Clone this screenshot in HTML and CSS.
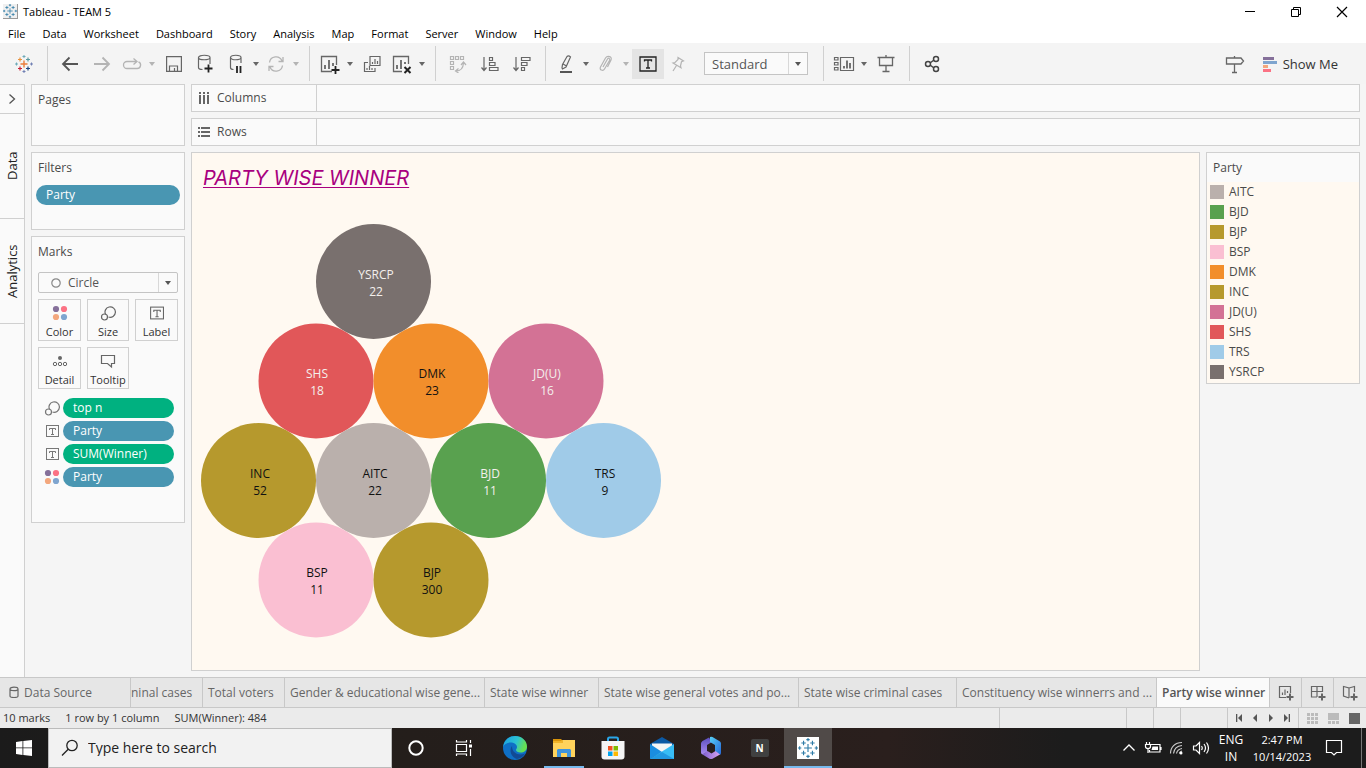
FILE: index.html
```html
<!DOCTYPE html>
<html lang="en">
<head>
<meta charset="utf-8">
<title>Tableau - TEAM 5</title>
<meta name="viewport" content="width=device-width, initial-scale=1">
<link rel="stylesheet" href="styles.css">
</head>
<body>
<svg class="defs" aria-hidden="true">
  <symbol id="caret" viewBox="0 0 12 12"><path d="M3 4h6L6 8z" fill="currentColor"/></symbol>
  <symbol id="label" viewBox="0 0 14 14"><rect x="1.5" y="1.5" width="12" height="11" fill="none" stroke="currentColor"/><path d="M4.5 6V4.500h6V6M7.500 4.500v5.500M6 10.500h3" fill="none" stroke="currentColor"/></symbol>
  <symbol id="size" viewBox="0 0 16 16"><path d="M5.600 9.500A5.200 5.200 0 1 1 8.500 12" fill="none" stroke="currentColor" stroke-width="1.200"/><circle cx="4.500" cy="12" r="3" fill="none" stroke="currentColor" stroke-width="1.200"/></symbol>
  <symbol id="dots" viewBox="0 0 16 16"><circle cx="4" cy="4" r="3.100" fill="#85709a"/><circle cx="12" cy="4" r="3.100" fill="#fb7284"/><circle cx="4" cy="12" r="3.100" fill="#f3a77d"/><circle cx="12" cy="12" r="3.100" fill="#7fa5cf"/></symbol>
  <symbol id="plusmark" viewBox="0 0 18 18"><path d="M9 5.500v7M5.500 9h7M5 2.500v4M3 4.500h4M13 2.500v4M11 4.500h4M5 11.500v4M3 13.500h4M13 11.500v4M11 13.500h4M9 0v3M7.500 1.500h3M9 15v3M7.500 16.500h3M0 9h3M1.500 7.500v3M15 9h3M16.500 7.500v3" fill="none" stroke="currentColor"/></symbol>
</svg>

<header class="titlebar">
  <span class="app-badge"><svg width="14" height="14"><use href="#plusmark"/></svg></span>
  <span class="app-name">Tableau - TEAM 5</span>
  <div class="window-buttons">
    <button aria-label="Minimize"><svg width="12" height="12"><path d="M1 5.500h10" stroke="#000"/></svg></button>
    <button aria-label="Restore"><svg width="12" height="12" fill="none" stroke="#000"><path d="M1.500 3.500h7v7h-7zM3.500 3V1.500h7v7H9"/></svg></button>
    <button aria-label="Close"><svg width="12" height="12" stroke="#000" stroke-width="1.200"><path d="M1 1l10 10M11 1L1 11"/></svg></button>
  </div>
</header>

<nav class="menubar">
  <a href="#">File</a><a href="#">Data</a><a href="#">Worksheet</a><a href="#">Dashboard</a><a href="#">Story</a><a href="#">Analysis</a><a href="#">Map</a><a href="#">Format</a><a href="#">Server</a><a href="#">Window</a><a href="#">Help</a>
</nav>

<div class="toolbar">
  <button class="tool" aria-label="Start page"><svg width="18" height="18" viewBox="0 0 18 18" fill="none"><path d="M9 5.500v7M5.500 9h7" stroke="#ea7c3a" stroke-width="1.400"/><path d="M5 2.500v4M3 4.500h4" stroke="#e8923c" stroke-width="1.200"/><path d="M13 2.500v4M11 4.500h4" stroke="#5b9aa0" stroke-width="1.200"/><path d="M5 11.500v4M3 13.500h4" stroke="#c72035" stroke-width="1.200"/><path d="M13 11.500v4M11 13.500h4" stroke="#1f457e" stroke-width="1.200"/><path d="M9 0v3M7.500 1.500h3M0 9h3M1.500 7.500v3" stroke="#6eaab8"/><path d="M9 15v3M7.500 16.500h3M15 9h3M16.500 7.500v3" stroke="#7180b4"/></svg></button>
  <span class="sep"></span>
  <button class="tool" aria-label="Undo"><svg width="18" height="16" fill="none" stroke="#555" stroke-width="1.800"><path d="M17 8H2M8.500 1.500L2 8l6.500 6.500"/></svg></button>
  <button class="tool off" aria-label="Redo"><svg width="18" height="16" fill="none" stroke="currentColor" stroke-width="1.800"><path d="M1 8h15M9.500 1.500L16 8l-6.500 6.500"/></svg></button>
  <button class="tool narrow off" aria-label="Replay"><svg width="20" height="14" fill="none" stroke="currentColor" stroke-width="1.300"><path d="M14 4.500H5a3.500 3.500 0 0 0 0 7h10a3.500 3.500 0 0 0 1.500-6.700M11.500 1.500l3.500 3-3.500 3"/></svg></button>
  <button class="drop off" aria-label="Replay options"><svg width="12" height="12"><use href="#caret"/></svg></button>
  <button class="tool" aria-label="Save"><svg width="16" height="16" fill="none" stroke="#666" stroke-width="1.200"><path d="M.6.600h14.800v14.800H.600zM3.500 15V10h8v5M8.500 12v3"/></svg></button>
  <button class="tool" aria-label="New data source"><svg width="18" height="20" fill="none" stroke="#666" stroke-width="1.200"><path d="M1.500 3.500v10c0 1 1.500 2 4 2M13 3.500V10M1.500 3.500c0-3 11.500-3 11.500 0s-11.500 3-11.500 0z"/><path d="M11.500 10.500v8M7.500 14.500h8" stroke="#222" stroke-width="1.800"/></svg></button>
  <button class="tool narrow" aria-label="Pause updates"><svg width="16" height="20" fill="none" stroke="#666" stroke-width="1.200"><path d="M2.500 3.500v10c0 1 1 2 3 2M13 3.500V9M2.500 3.500c0-3 10.500-3 10.500 0s-10.500 3-10.500 0z"/><path d="M9 12v7M12.500 12v7" stroke="#222" stroke-width="1.800"/></svg></button>
  <button class="drop" aria-label="Pause options"><svg width="12" height="12"><use href="#caret"/></svg></button>
  <button class="tool narrow off" aria-label="Refresh"><svg width="18" height="16" fill="none" stroke="currentColor" stroke-width="1.300"><path d="M2.500 6.500A6.500 6.500 0 0 1 15 5M15.500 9.500A6.500 6.500 0 0 1 3 11M16 1v4.500h-4.500M2 15v-4.500h4.500"/></svg></button>
  <button class="drop off" aria-label="Refresh options"><svg width="12" height="12"><use href="#caret"/></svg></button>
  <span class="sep"></span>
  <button class="tool narrow" aria-label="New worksheet"><svg width="20" height="20" fill="none" stroke="#666" stroke-width="1.300"><path d="M16.500 11V2.500h-15v15H12"/><path d="M5 15v-4M9 15V6M13 12V9" stroke-width="1.800"/><path d="M15.500 12v8M11.500 16h8" stroke="#222" stroke-width="1.800"/></svg></button>
  <button class="drop" aria-label="New sheet options"><svg width="12" height="12"><use href="#caret"/></svg></button>
  <button class="tool" aria-label="Duplicate"><svg width="18" height="18" fill="none" stroke="#666" stroke-width="1.200"><path d="M7 1.500h10v9H7zM5 7.500H1.500v9H12V13M9.500 9V7M12 9V4M14.500 9V6M4 15v-2M6.500 15v-4M9 15v-2"/></svg></button>
  <button class="tool narrow" aria-label="Clear sheet"><svg width="20" height="20" fill="none" stroke="#666" stroke-width="1.300"><path d="M16.500 10V2.500h-15v15H10"/><path d="M5 15v-4M9 15V6M13 10V8" stroke-width="1.800"/><path d="M12.500 13l6 6M18.500 13l-6 6" stroke="#222" stroke-width="2"/></svg></button>
  <button class="drop" aria-label="Clear options"><svg width="12" height="12"><use href="#caret"/></svg></button>
  <span class="sep"></span>
  <button class="tool off" aria-label="Swap rows and columns"><svg width="18" height="18" fill="none" stroke="currentColor" stroke-width="1.200"><path d="M1.500 1.500h3v3h-3zM6.500 1.500h3v3h-3zM11.500 1.500h3v3h-3zM1.500 6.500h3v3h-3zM1.500 11.500h3v3h-3zM7 16q7 0 7.500-8M12 10l2.500-3L17 10M9.500 13.500L6.500 16l3 2"/></svg></button>
  <button class="tool" aria-label="Sort ascending"><svg width="18" height="16" fill="none" stroke="#666" stroke-width="1.200"><path d="M3 1v13M.500 11.500L3 14.500l2.500-3M8.500 1.500h3v3h-3zM8.500 6.500h5.500v3H8.500zM8.500 11.500h8.500v3H8.500z"/></svg></button>
  <button class="tool" aria-label="Sort descending"><svg width="18" height="16" fill="none" stroke="#666" stroke-width="1.200"><path d="M3 1v13M.500 11.500L3 14.500l2.500-3M8.500 1.500h8.500v3H8.500zM8.500 6.500h5.500v3H8.500zM8.500 11.500h3v3h-3z"/></svg></button>
  <span class="sep"></span>
  <button class="tool narrow" aria-label="Highlight"><svg width="14" height="20" fill="none" stroke="#666" stroke-width="1.200"><path d="M3.500 10.500L8 2.500q1.500-1.500 3.500.500L7 13l-3.500 2-.500-1zM4 10l3.500 2"/><path d="M1 18h12" stroke="#555" stroke-width="2"/></svg></button>
  <button class="drop" aria-label="Highlight options"><svg width="12" height="12"><use href="#caret"/></svg></button>
  <button class="tool narrow off" aria-label="Group members"><svg width="16" height="18" fill="none" stroke="currentColor" stroke-width="1.200"><path d="M5 12l4.500-8c1-1.500 3-.500 2 1.500L6.500 14c-1.500 2.500-5.500 1-4-2L7.500 3c2-3 7-1.500 5.500 2l-3.500 7"/></svg></button>
  <button class="drop off" aria-label="Group options"><svg width="12" height="12"><use href="#caret"/></svg></button>
  <button class="tool pressed" aria-label="Show mark labels" aria-pressed="true"><svg width="18" height="16" fill="none" stroke="#222" stroke-width="1.300"><path d="M1 1h16v14H1zM5.500 5.500V4h7v1.500M9 4v8M7 12h4"/></svg></button>
  <button class="tool narrow off" aria-label="Fix axes"><svg width="14" height="16" fill="none" stroke="currentColor" stroke-width="1.200"><path d="M7 1.500l5.500 3.500-2 .8-1 4 .5 2L2 7l2-.5 3-3zM5.500 9.500L2 15"/></svg></button>
  <span class="select fit">
    <select aria-label="Fit"><option>Standard</option></select>
    <svg width="12" height="12"><use href="#caret"/></svg>
  </span>
  <span class="sep"></span>
  <button class="tool narrow" aria-label="Show or hide cards"><svg width="22" height="16" fill="none" stroke="#666" stroke-width="1.200"><path d="M1.500 1.500h3.500v2.500H1.500zM1.500 6.500h3.500v2.500H1.500zM1.500 11.500h3.500v2.500H1.500zM7.500 1.500h13v13h-13z"/><path d="M11 12.500V10M14 12.500v-8M17 12.500V7" stroke-width="1.800"/></svg></button>
  <button class="drop" aria-label="Card options"><svg width="12" height="12"><use href="#caret"/></svg></button>
  <button class="tool" aria-label="Presentation mode"><svg width="18" height="18" fill="none" stroke="#666" stroke-width="1.300"><path d="M.500 2.500h17M2.500 2.500v8h13v-8M9 0v2M9 11v5.500M5.500 16.500h7"/></svg></button>
  <span class="sep"></span>
  <button class="tool" aria-label="Share"><svg width="16" height="18" fill="none" stroke="#444" stroke-width="1.500"><circle cx="4" cy="9" r="2.500"/><circle cx="12" cy="4" r="2.500"/><circle cx="12" cy="14" r="2.500"/><path d="M6 8l4-3M6 10l4 3"/></svg></button>
  <div class="toolbar-end">
    <button class="tool" aria-label="Guide"><svg width="20" height="20" fill="none" stroke="#666" stroke-width="1.300"><path d="M1.500 4h14.500l2.500 3-2.500 3H1.500zM9.500 2v2M9.500 10v8.500M7 18.500h5"/></svg></button>
    <button class="show-me"><svg width="14" height="16"><path d="M0 1h11v3H0z" fill="#85709a"/><path d="M0 5h14v3H0z" fill="#7fa5cf"/><path d="M0 9h5v3H0z" fill="#f3a77d"/><path d="M0 13h8v3H0z" fill="#fb7284"/></svg>Show Me</button>
  </div>
</div>

<div class="workspace">
  <aside class="rail">
    <button class="expand" aria-label="Expand"><svg width="8" height="12" fill="none" stroke="#555" stroke-width="1.300"><path d="M1.500 1.500L6.500 6l-5 4.500"/></svg></button>
    <button class="rail-tab">Data</button>
    <button class="rail-tab">Analytics</button>
    <div class="rail-end"></div>
  </aside>

  <div class="cards">
    <section class="card pages"><h2>Pages</h2></section>
    <section class="card filters"><h2>Filters</h2><button class="pill blue">Party</button></section>
    <section class="card marks">
      <h2>Marks</h2>
      <div class="select mark-type">
        <svg class="ring" width="12" height="12"><circle cx="6" cy="6" r="4.200" fill="none" stroke="#888" stroke-width="1.200"/></svg>
        <select aria-label="Mark type"><option>Circle</option></select>
        <svg width="12" height="12"><use href="#caret"/></svg>
      </div>
      <div class="mark-buttons">
        <button><svg width="16" height="16"><use href="#dots"/></svg>Color</button>
        <button><svg width="16" height="16"><use href="#size"/></svg>Size</button>
        <button><svg width="15" height="16"><use href="#label"/></svg>Label</button>
        <button><svg width="16" height="16"><circle cx="8" cy="5" r="2" fill="#666"/><g fill="none" stroke="#666"><circle cx="3" cy="11" r="1.700"/><circle cx="8" cy="11" r="1.700"/><circle cx="13" cy="11" r="1.700"/></g></svg>Detail</button>
        <button><svg width="16" height="16" fill="none" stroke="#666" stroke-width="1.200"><path d="M1.500 2.500h13v8h-3v3.500l-4-3.500h-6z"/></svg>Tooltip</button>
      </div>
      <ul class="encodings">
        <li><svg width="16" height="16"><use href="#size"/></svg><button class="pill green">top n</button></li>
        <li><svg width="14" height="14"><use href="#label"/></svg><button class="pill blue">Party</button></li>
        <li><svg width="14" height="14"><use href="#label"/></svg><button class="pill green">SUM(Winner)</button></li>
        <li><svg width="16" height="16"><use href="#dots"/></svg><button class="pill blue">Party</button></li>
      </ul>
    </section>
  </div>

  <main class="sheet">
    <div class="shelf"><span class="shelf-name"><svg width="14" height="14" fill="none" stroke="#666" stroke-width="2"><path d="M3 1v2M7 1v2M11 1v2M3 4v9M7 4v9M11 4v9"/></svg>Columns</span></div>
    <div class="shelf"><span class="shelf-name"><svg width="14" height="14" fill="none" stroke="#666" stroke-width="2"><path d="M1 3h2M1 7h2M1 11h2M4 3h9M4 7h9M4 11h9"/></svg>Rows</span></div>
    <div class="view-row">
      <section class="view">
        <h1>PARTY WISE WINNER</h1>
        <svg class="bubbles" width="480" height="450" role="img" aria-label="Seats by party">
          <g>
            <circle cx="181.500" cy="81.500" r="57.500" fill="#79706e"/>
            <circle cx="124" cy="181" r="57.500" fill="#e15759"/>
            <circle cx="239" cy="181" r="57.500" fill="#f28e2b"/>
            <circle cx="354" cy="181" r="57.500" fill="#d37295"/>
            <circle cx="66.500" cy="280.500" r="57.500" fill="#b6992d"/>
            <circle cx="181.500" cy="280.500" r="57.500" fill="#bab0ac"/>
            <circle cx="296.500" cy="280.500" r="57.500" fill="#59a14f"/>
            <circle cx="411.500" cy="280.500" r="57.500" fill="#a0cbe8"/>
            <circle cx="124" cy="380" r="57.500" fill="#fabfd2"/>
            <circle cx="239" cy="380" r="57.500" fill="#b6992d"/>
          </g>
          <g class="on-dark">
            <text x="184" y="79">YSRCP</text><text x="184" y="96">22</text>
            <text x="125" y="178">SHS</text><text x="125" y="195">18</text>
            <text x="355" y="178">JD(U)</text><text x="355" y="195">16</text>
            <text x="298" y="278">BJD</text><text x="298" y="295">11</text>
          </g>
          <g class="on-light">
            <text x="240" y="178">DMK</text><text x="240" y="195">23</text>
            <text x="68" y="278">INC</text><text x="68" y="295">52</text>
            <text x="183" y="278">AITC</text><text x="183" y="295">22</text>
            <text x="413" y="278">TRS</text><text x="413" y="295">9</text>
            <text x="125" y="377">BSP</text><text x="125" y="394">11</text>
            <text x="240" y="377">BJP</text><text x="240" y="394">300</text>
          </g>
        </svg>
      </section>
      <aside class="legend">
        <h2>Party</h2>
        <ul>
          <li><i class="sw aitc"></i>AITC</li>
          <li><i class="sw bjd"></i>BJD</li>
          <li><i class="sw bjp"></i>BJP</li>
          <li><i class="sw bsp"></i>BSP</li>
          <li><i class="sw dmk"></i>DMK</li>
          <li><i class="sw inc"></i>INC</li>
          <li><i class="sw jdu"></i>JD(U)</li>
          <li><i class="sw shs"></i>SHS</li>
          <li><i class="sw trs"></i>TRS</li>
          <li><i class="sw ysrcp"></i>YSRCP</li>
        </ul>
      </aside>
    </div>
  </main>
</div>

<nav class="tabs">
  <button class="source"><svg width="10" height="14" fill="none" stroke="#666" stroke-width="1.200"><path d="M1 3v7c0 2 8 2 8 0V3M1 3c0-2.500 8-2.500 8 0s-8 2-8 0z"/></svg>Data Source</button>
  <button class="clipped">ninal cases</button>
  <button>Total voters</button>
  <button>Gender &amp; educational wise gene...</button>
  <button>State wise winner</button>
  <button>State wise general votes and po...</button>
  <button>State wise criminal cases</button>
  <button>Constituency wise winnerrs and ...</button>
  <button class="current">Party wise winner</button>
  <button class="add" aria-label="New worksheet"><svg width="16" height="16" fill="none" stroke="#666" stroke-width="1.200"><path d="M12.500 8V1.500h-11v11H8M4.500 10V7.500M7 10V4.500M9.500 8V6"/><path d="M12 8.500v7M8.500 12h7" stroke-width="2"/></svg></button>
  <button class="add" aria-label="New dashboard"><svg width="16" height="16" fill="none" stroke="#666" stroke-width="1.200"><path d="M12.500 7V1.500h-11v10.500H7M7 1.500V12M1.500 6.500h11"/><path d="M12 8.500v7M8.500 12h7" stroke-width="2"/></svg></button>
  <button class="add" aria-label="New story"><svg width="16" height="16" fill="none" stroke="#666" stroke-width="1.200"><path d="M7 13V3L1.500 1.500V11L7 13M7 3l5.500-1.500V7"/><path d="M12 8.500v7M8.500 12h7" stroke-width="2"/></svg></button>
</nav>

<footer class="status">
  <span>10 marks</span><span>1 row by 1 column</span><span>SUM(Winner): 484</span>
  <div class="status-end">
    <i class="cell wide"></i><i class="cell"></i><i class="cell"></i><i class="cell mid"></i>
    <div class="pager">
      <button aria-label="First"><svg width="8" height="8"><path d="M1 0h1.300v8H1zM7 0v8L3 4z" fill="#555"/></svg></button>
      <button aria-label="Previous"><svg width="8" height="8"><path d="M6 0v8L2 4z" fill="#555"/></svg></button>
      <button aria-label="Next"><svg width="8" height="8"><path d="M2 0v8l4-4z" fill="#555"/></svg></button>
      <button aria-label="Last"><svg width="8" height="8"><path d="M1 0v8l4-4zM5.700 0H7v8H5.700z" fill="#555"/></svg></button>
    </div>
    <div class="modes">
      <button aria-label="Sheet sorter"><svg width="11" height="11" fill="#bbb"><path d="M0 0h3v3H0zM4 0h3v3H4zM8 0h3v3H8zM0 4h3v3H0zM4 4h3v3H4zM8 4h3v3H8zM0 8h3v3H0zM4 8h3v3H4zM8 8h3v3H8z"/></svg></button>
      <button aria-label="Filmstrip"><svg width="11" height="11" fill="#bbb"><path d="M0 0h11v7H0zM0 8h3v3H0zM4 8h3v3H4zM8 8h3v3H8z"/></svg></button>
      <button aria-label="Tabs"><svg width="11" height="11"><path d="M0 0h11v11H0z" fill="#666"/></svg></button>
    </div>
  </div>
</footer>

<div class="taskbar">
  <button class="task start" aria-label="Start"><svg width="16" height="16" fill="#fff"><path d="M0 2l6.500-1v6.500H0zM7.300.900L16 0v7.500H7.300zM0 8.300h6.500v6.600L0 14zM7.300 8.300H16V16l-8.700-1z"/></svg></button>
  <label class="search"><svg width="18" height="18" fill="none" stroke="#222" stroke-width="1.300"><circle cx="11" cy="6.500" r="5.200"/><path d="M7.200 10.300L1 16.500"/></svg><input type="text" placeholder="Type here to search" aria-label="Search"></label>
  <button class="task" aria-label="Cortana"><svg width="18" height="18"><circle cx="9" cy="9" r="6.700" fill="none" stroke="#fff" stroke-width="2"/></svg></button>
  <button class="task" aria-label="Task view"><svg width="18" height="18" fill="none" stroke="#fff" stroke-width="1.200"><path d="M1.500 5.500h10v7h-10zM1.500 1v2h10V1M1.500 17v-2h10v2M15.500 1v3M15.500 10v7"/><path d="M14 5.500h3v3h-3z" fill="#fff" stroke="none"/></svg></button>
  <div class="apps">
  <button class="task app" aria-label="Edge"><svg width="26" height="26" viewBox="0 0 26 26"><defs><linearGradient id="eg" x1="0" y1="0" x2="1" y2=".3"><stop offset="0" stop-color="#1b9de2"/><stop offset=".6" stop-color="#2cc3d2"/><stop offset="1" stop-color="#66e052"/></linearGradient></defs><circle cx="13" cy="13" r="12" fill="#0f6fc5"/><path d="M1 12C2 5 7 1 13 1c7 0 12 5 12 10.500 0 4-3 6-6.500 6-2.500 0-4.500-1-4.500-2.500 0-1 1-1.500 1-3C15 9.500 12 7.500 8.500 7.500 5 7.500 2 9.500 1 12z" fill="url(#eg)"/><path d="M10 11c-3.500 4.500-.500 11.500 5 13 3.500-.500 6.500-2.500 8-5.500-6 2.500-13 0-13-7.500z" fill="#124a94"/></svg></button>
  <button class="task app running" aria-label="File Explorer"><svg width="22" height="20"><path d="M0 1h8l2 2H0z" fill="#d9940a"/><path d="M0 3h8l2-1h12v17H0z" fill="#ffd35c"/><path d="M0 3h8l2-1v3H0z" fill="#f0b429"/><path d="M4 19v-7l1-1h12l1 1v7h-4v-4H8v4z" fill="#3f94dc"/></svg></button>
  <button class="task app" aria-label="Microsoft Store"><svg width="24" height="24"><path d="M7 6V3q0-1.500 1.500-1.500h7Q17 1.500 17 3v3" fill="none" stroke="#2aa6e8" stroke-width="2"/><path d="M.500 5h23v15.500q0 3-3 3h-17q-3 0-3-3z" fill="#f5f5f5"/><path d="M7 10h4.500v4.500H7z" fill="#f25022"/><path d="M12.500 10H17v4.500h-4.500z" fill="#7fba00"/><path d="M7 15.500h4.500V20H7z" fill="#00a4ef"/><path d="M12.500 15.500H17V20h-4.500z" fill="#ffb900"/></svg></button>
  <button class="task app" aria-label="Mail"><svg width="24" height="24"><path d="M0 8l12-7 12 7v3H0z" fill="#0c59a4"/><path d="M2 7.500h20v9H2z" fill="#f5f5f5"/><path d="M0 8l12 8-12 7z" fill="#1a8de0"/><path d="M24 8L0 23h24z" fill="#38bdf5"/><path d="M0 23l12-7 12 7z" fill="#2198e2"/></svg></button>
  <button class="task app" aria-label="Microsoft 365"><svg width="22" height="24"><defs><linearGradient id="ma" x1="0" y1="0" x2="0" y2="1"><stop offset="0" stop-color="#5b4fc0"/><stop offset="1" stop-color="#a98bf0"/></linearGradient><linearGradient id="mb" x1="0" y1="0" x2="1" y2="1"><stop offset="0" stop-color="#57d0f5"/><stop offset="1" stop-color="#2668d8"/></linearGradient><linearGradient id="mc" x1="0" y1="0" x2="1" y2="0"><stop offset="0" stop-color="#7d5fd0"/><stop offset="1" stop-color="#d9a3f0"/></linearGradient></defs><path d="M9 1.500L2.500 5Q1 6 1 7.500v9Q1 18 2.500 18.500L7 16V9l5-3z" fill="url(#ma)"/><path d="M10 1q1-.7 2.500 0L20 5.500q1 .8 1 2V17q0 1.200-1 2l-5-3.500V9L10 6z" fill="url(#mb)"/><path d="M2.500 18.500L7.500 15l4 2.500 4-2.500 4.500 3.500-7.500 4.200q-1.500.7-3 0z" fill="url(#mc)"/></svg></button>
  <button class="task app" aria-label="N app"><span class="n-tile">N</span></button>
  <button class="task running active" aria-label="Tableau"><span class="tableau-tile"><svg width="20" height="20"><use href="#plusmark"/></svg></span></button>
  </div>
  <div class="tray">
    <button aria-label="Hidden icons"><svg width="14" height="10" fill="none" stroke="#fff" stroke-width="1.300"><path d="M1.500 7.500L7 2l5.500 5.500"/></svg></button>
    <button aria-label="Battery"><svg width="18" height="14" fill="none" stroke="#fff" stroke-width="1.200"><path d="M7 3.500h9v7.500H5.500V9M17 6v3M2.500 1v2M5.500 1v2M1.500 3.500h5v2q0 2-2.500 2t-2.500-2zM4 8v4"/><path d="M8.500 5.500H14v3.500H7.500z" fill="#fff" stroke="none"/></svg></button>
    <button aria-label="Wi-Fi"><svg width="16" height="14" fill="none" stroke="#ccc" stroke-width="1.200"><path d="M1.500 12.500C1.500 6 6 1.500 13 1.500M4.500 12.500C5 8 8 5 13 4.500M7.500 12.500c.5-3 2.500-4.500 5.500-5M10.500 12.500c0-1.500 1-2 2.500-2.500"/><circle cx="12" cy="12" r="1.500" fill="#fff" stroke="none"/></svg></button>
    <button aria-label="Volume"><svg width="18" height="14" fill="none" stroke="#fff" stroke-width="1.200"><path d="M1.500 5v4H4l3.500 3.500v-11L4 5zM9.500 5q1.500 2 0 4M12 3q3 4 0 8M14.500 1.500q4 5.500 0 11"/></svg></button>
    <button class="lang">ENG<br>IN</button>
    <button class="clock">2:47 PM<br>10/14/2023</button>
    <button class="notes" aria-label="Notifications"><svg width="18" height="18" fill="none" stroke="#fff" stroke-width="1.200"><path d="M1.500 1.500h15v12h-5L9 16l-2.500-2.500h-5z"/></svg></button>
    <i class="peek"></i>
  </div>
</div>
</body>
</html>
```
FILE: styles.css
```css
* { box-sizing: border-box; }
body {
  margin: 0;
  min-height: 100vh;
  display: flex;
  flex-direction: column;
  overflow-x: hidden;
  background: #f5f5f5;
  color: #333;
  font: 12px/16px "Open Sans", "Noto Sans", sans-serif;
}
button, select, input { font: inherit; color: inherit; margin: 0; padding: 0; border: 0; background: none; }
button { display: flex; align-items: center; justify-content: center; white-space: nowrap; }
h1, h2, ul { margin: 0; padding: 0; font-weight: 400; list-style: none; }
h2 { font-size: 12px; color: #4a4a4a; }
svg { flex: none; display: block; }
.defs { position: absolute; width: 0; height: 0; }

/* window frame */
.titlebar { display: flex; align-items: center; height: 23px; padding-left: 3px; background: #fff; color: #000; font-size: 11px; }
.app-badge { display: flex; color: #2e7ba6; background: #f0f0f0; border-right: 1px solid #999; border-bottom: 1px solid #999; }
.app-name { margin-left: 5px; }
.window-buttons { display: flex; margin-left: auto; height: 20px; padding-right: 1px; }
.window-buttons button { width: 46px; }
.menubar { display: flex; gap: 17px; height: 20px; padding: 3px 8px 0; background: #fff; font-size: 11px; }
.menubar a { color: #000; text-decoration: none; }

/* toolbar */
.toolbar { display: flex; align-items: center; height: 41px; padding-left: 8px; background: #f4f4f4; color: #666; }
.tool { width: 32px; height: 30px; flex: none; }
.tool.narrow { width: 28px; }
.off { color: #b4b4b4; }
.drop { width: 12px; height: 30px; flex: none; }
.pressed { background: #e4e4e4; }
.sep { width: 1px; height: 35px; margin: 0 6px 0 7px; background: #d0d0d0; flex: none; }
.select { position: relative; display: flex; border: 1px solid #c4c4c4; background: #fafafa; color: #555; }
.select select { flex: 1; min-width: 0; appearance: none; outline: 0; }
.select > svg:last-child { position: absolute; right: 3px; top: 50%; margin-top: -6px; pointer-events: none; }
.select::after { content: ""; position: absolute; right: 18px; top: 0; bottom: 0; border-left: 1px solid #d8d8d8; }
.fit { width: 104px; height: 23px; margin: 0 8px 0 12px; font-size: 13px; }
.fit select { padding-left: 7px; }
.toolbar-end { display: flex; align-items: center; margin-left: auto; padding-right: 28px; }
.show-me { gap: 6px; margin-left: 12px; font-size: 13px; color: #333; }

/* workspace */
.workspace { flex: 1; display: flex; }
.rail { width: 25px; flex: none; display: flex; flex-direction: column; border-top: 1px solid #d0d0d0; border-right: 1px solid #d0d0d0; background: #fafafa; }
.rail button { color: #222; }
.expand { height: 28px; }
.rail-tab { height: 105px; writing-mode: vertical-rl; transform: rotate(180deg); font-size: 13px; border-bottom: 1px solid #d0d0d0; }
.rail .rail-tab, .rail-end { flex: none; }
.expand { border-bottom: 1px solid #d0d0d0; height: 29px; }
.rail .rail-tab { border-bottom: 0; border-top: 1px solid #d0d0d0; }
.cards { width: 154px; flex: none; margin-left: 6px; display: flex; flex-direction: column; gap: 6px; }
.card { padding: 7px 6px; border: 1px solid #d0d0d0; background: #fafafa; }
.pages { height: 62px; }
.filters { height: 78px; padding-left: 4px; padding-right: 4px; }
.filters h2 { padding-left: 2px; }
.filters .pill { margin-top: 9px; width: 100%; }
.marks { height: 287px; }
.pill { height: 20px; padding: 0 10px; border-radius: 10px; color: #fff; justify-content: flex-start; font-weight: 500; }
.blue { background: #4996b2; }
.green { background: #00b180; }
.mark-type { align-items: center; height: 21px; margin-top: 12px; border-radius: 2px; }
.ring { margin-left: 11px; }
.mark-type select { padding-left: 6px; }
.mark-buttons { display: grid; grid-template-columns: 43px 42px 43px; gap: 6px; margin-top: 6px; }
.mark-buttons button { height: 42px; flex-direction: column; gap: 3px; border: 1px solid #d0d0d0; color: #333; padding-top: 4px; font-size: 11px; }
.mark-buttons svg { color: #666; }
.encodings { margin-top: 9px; display: grid; gap: 3px; }
.encodings li { display: grid; grid-template-columns: 16px 1fr; gap: 3px; align-items: center; justify-items: center; margin: 0 4px 0 6px; color: #777; }
.encodings .pill { width: 100%; }

.sheet { flex: 1; min-width: 0; display: flex; flex-direction: column; gap: 6px; margin: 0 6px 6px; }
.shelf { height: 28px; display: flex; border: 1px solid #d0d0d0; background: #fafafa; }
.shelf-name { width: 125px; display: flex; align-items: center; gap: 6px; padding-left: 5px; border-right: 1px solid #d0d0d0; color: #4a4a4a; }
.view-row { flex: 1; display: flex; gap: 6px; align-items: flex-start; }
.view { flex: 1; min-width: 0; align-self: stretch; border: 1px solid #d0d0d0; background: #fff9f1; }
.view h1 { height: 47px; padding: 12px 11px 0; font-family: Inter, Roboto, sans-serif; font-size: 20px; line-height: 27px; font-style: italic; color: #a8007f; text-decoration: underline 1px; text-underline-offset: 2px; text-decoration-skip-ink: none; }
.bubbles text { font-size: 12px; text-anchor: middle; }
.on-dark { fill: #f4efec; }
.on-light { fill: #111; }
.legend { width: 154px; flex: none; border: 1px solid #d0d0d0; background: #fff9f1; }
.legend h2 { height: 29px; padding: 7px 6px; background: #fafafa; }
.legend ul { padding-bottom: 1px; }
.legend li { display: flex; align-items: center; gap: 5px; height: 20px; padding-left: 3px; line-height: 18px; color: #4a4a4a; }
.sw { width: 14px; height: 14px; }
.aitc { background: #bab0ac; }
.bjd { background: #59a14f; }
.bjp, .inc { background: #b6992d; }
.bsp { background: #fabfd2; }
.dmk { background: #f28e2b; }
.jdu { background: #d37295; }
.shs { background: #e15759; }
.trs { background: #a0cbe8; }
.ysrcp { background: #79706e; }

/* sheet tabs */
.tabs { display: grid; grid-template-columns: 130px 72px 82px 200px 114px 200px 158px 200px 113px 32px 32px 1fr; height: 31px; border-top: 1px solid #c8c8c8; border-bottom: 1px solid #c8c8c8; background: #e6e6e6; color: #666; }
.tabs button { justify-content: flex-start; padding-left: 5px; border-left: 1px solid #c8c8c8; overflow: hidden; }
.tabs .source { gap: 5px; padding-left: 9px; border-left: 0; }
.tabs .clipped { padding-left: 0; }
.tabs .current { background: #fafafa; font-weight: 600; color: #555; }
.tabs .add { padding-left: 8px; }

.status { display: flex; gap: 15px; align-items: center; height: 20px; padding-left: 3px; background: #ebebeb; font-size: 11px; }
.status-end { display: flex; align-self: stretch; margin-left: auto; }
.status-end > * { border-left: 1px solid #c8c8c8; }
.cell { width: 27px; }
.cell.wide { width: 127px; }
.cell.mid { width: 47px; }
.pager { display: flex; justify-content: space-between; align-items: center; width: 71px; padding: 0 7px; }
.modes { display: flex; align-items: center; justify-content: space-between; width: 68px; padding: 0 6px 0 8px; }

/* taskbar */
.taskbar { display: flex; height: 40px; background: linear-gradient(90deg, #1b1b1b, #241e1b 30%, #2a1f1d 65%, #1c1c1c 78%); color: #fff; }
.task { width: 48px; height: 40px; flex: none; }
.task.app { width: 49px; }
.apps { display: flex; margin-left: 2px; }
.search { width: 344px; display: flex; align-items: center; gap: 9px; padding-left: 12px; border: 1px solid #bbb; background: #f2f2f2; color: #222; }
.search input { flex: 1; min-width: 0; font-size: 14px; outline: 0; }
.search input::placeholder { color: #222; opacity: 1; }
.running { background: linear-gradient(#76b9ed, #76b9ed) center bottom / 40px 2px no-repeat; }
.running.active { background: linear-gradient(#76b9ed, #76b9ed) center bottom / 100% 2px no-repeat #504a48; }
.n-tile { width: 18px; height: 18px; border-radius: 2px; background: #404040; font-size: 10px; line-height: 18px; font-weight: 700; }
.tableau-tile { padding: 1px; background: #fff; color: #2e7ba6; }
.tray { display: flex; align-items: center; margin-left: auto; height: 40px; }
.tray button { width: 24px; height: 40px; }
.tray .lang { width: 36px; line-height: 17px; }
.tray .clock { width: 66px; line-height: 17px; font-size: 11px; }
.tray .notes { width: 38px; }
.peek { width: 1px; height: 40px; margin: 0 4px 0 8px; background: #777; }
```
